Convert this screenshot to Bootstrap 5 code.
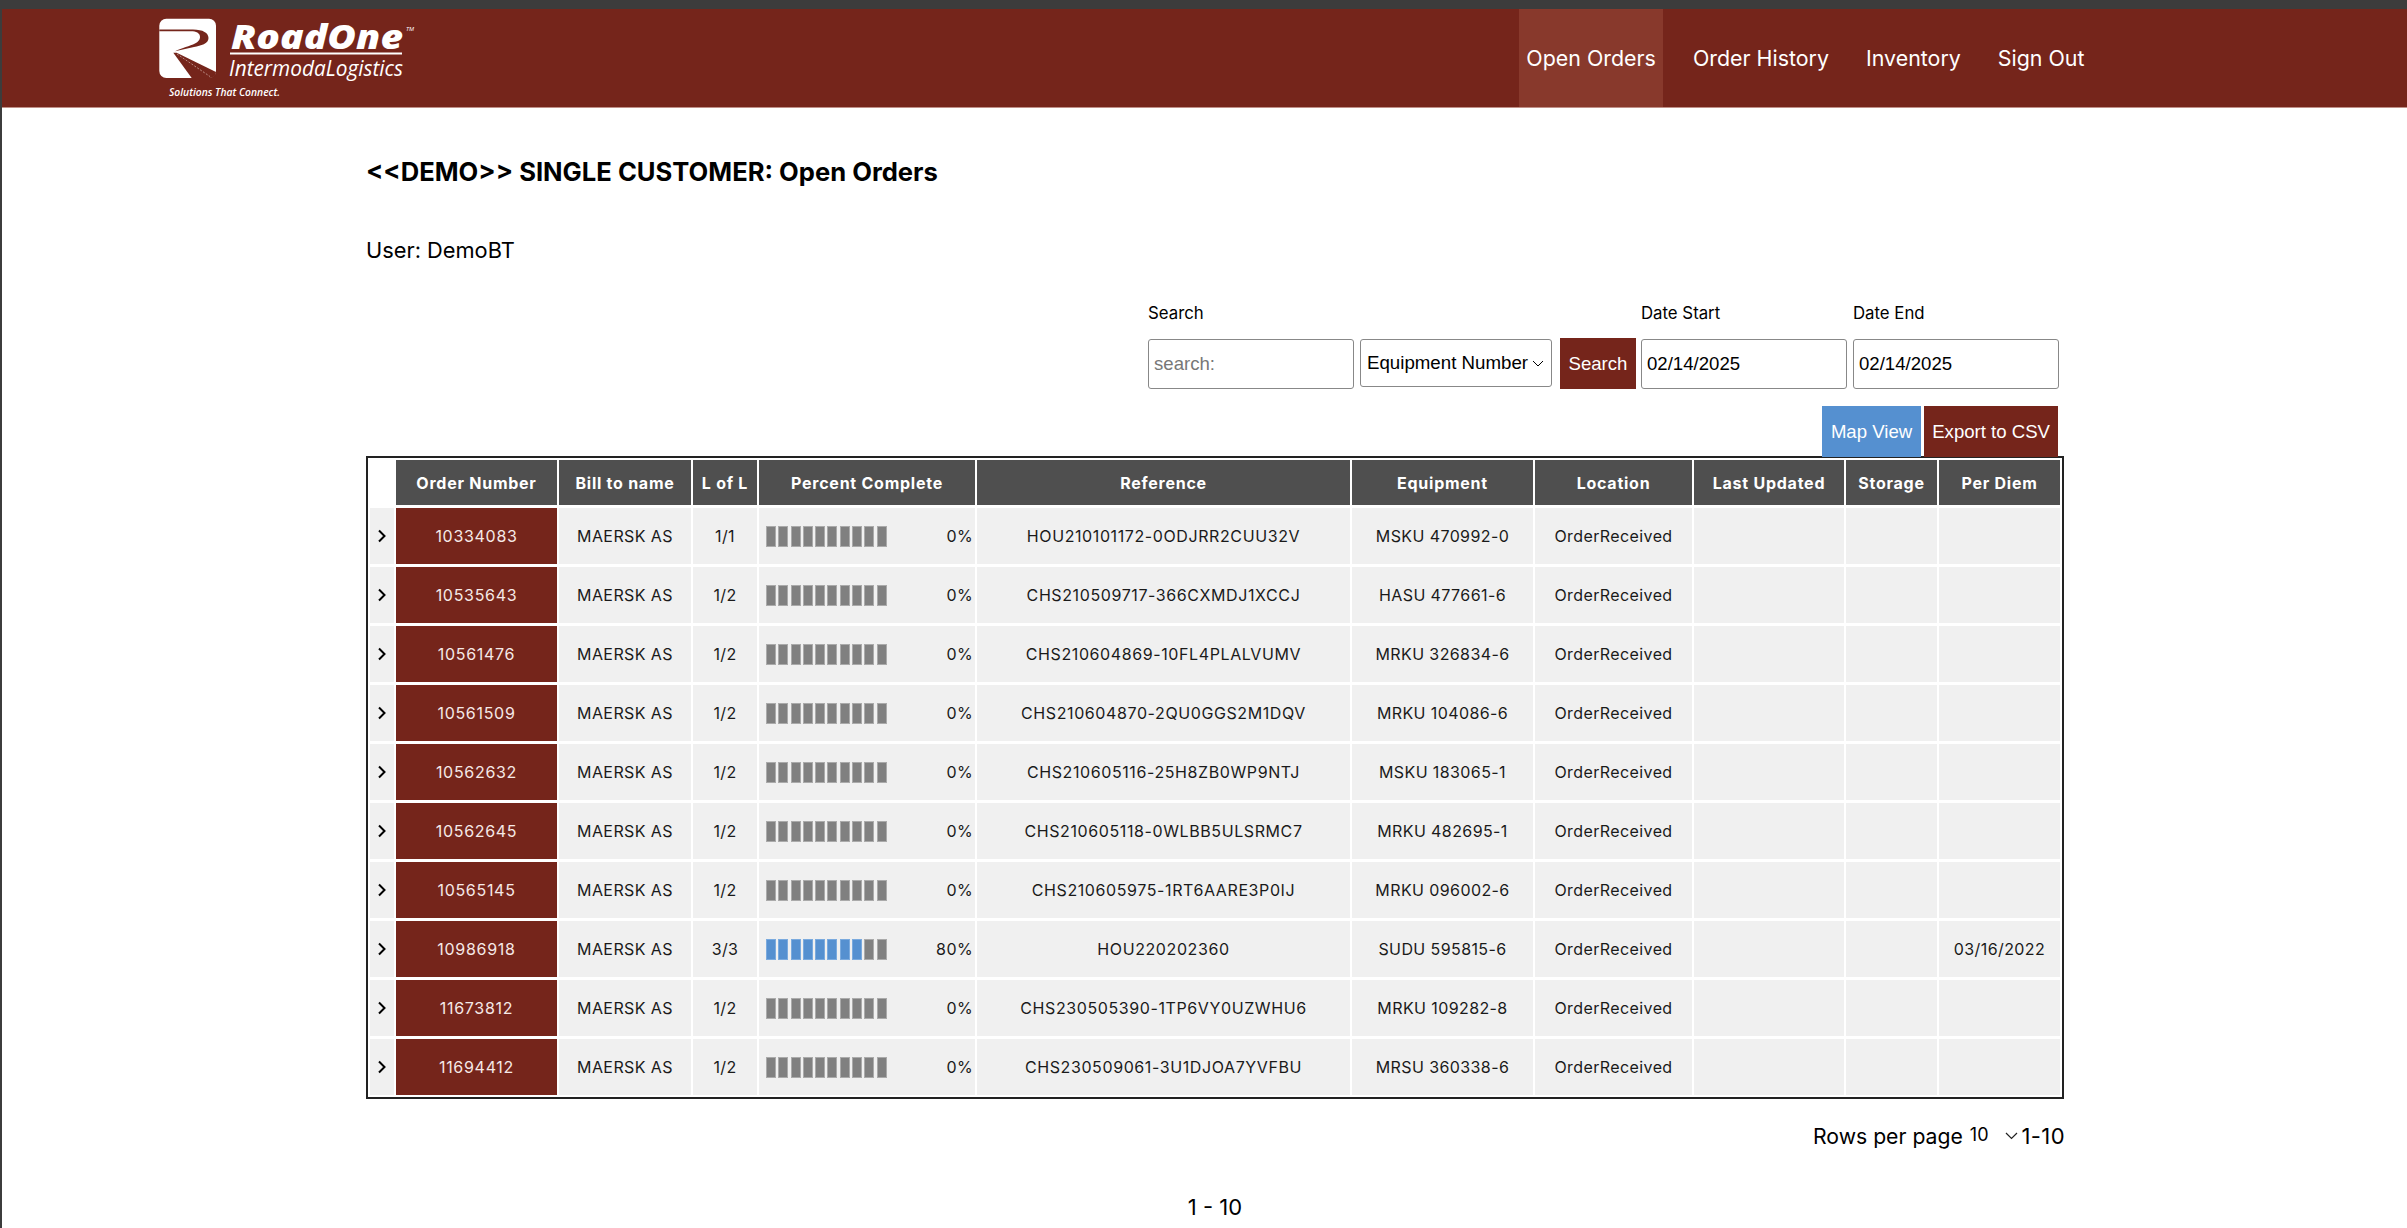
<!DOCTYPE html>
<html lang="en">
<head>
  <meta charset="UTF-8">
  <title>Open Orders</title>
  <link href="https://cdn.jsdelivr.net/npm/bootstrap@5.3.0/dist/css/bootstrap.min.css" rel="stylesheet">
  <style>
    body { background: #fff; border-left: 2px solid #3c3c3c; border-top: 9px solid #3c3c3c; font-family: Inter, "Liberation Sans", sans-serif; color: #000; min-height: 1228px; overflow: hidden; }
    .top-nav { background: #75251b; height: 99px; border-bottom: 1px solid #c09088; padding: 0; }
    .top-nav .navbar-brand { margin: 0 0 0 156px; padding: 0; line-height: 0; }
    .logo-big { font: italic 800 33px "Open Sans", sans-serif; fill: #fff; }
    .logo-sub { font: italic 400 21px "Open Sans", sans-serif; fill: #fff; }
    .logo-tag { font: italic 600 10.5px "Open Sans", sans-serif; fill: #fff; }
    .logo-tm { font: italic 400 6px "Open Sans", sans-serif; fill: #fff; }
    .top-links { margin-right: 315px; height: 98px; }
    .top-links .nav-link { color: #fff; font-size: 21.4px; height: 98px; padding: 0 7.5px; margin-right: 22px; display: flex; align-items: center; }
    .top-links .nav-link.active { background: #88392c; color: #fff; }
    .top-links .nav-item:last-child .nav-link { margin-right: 0; }
    .page-body { padding: 0 343px 0 364px; }
    .page-title { font-size: 25.6px; font-weight: 700; margin: 0; padding-top: 48px; line-height: 32px; }
    .user-line { font-size: 21.8px; line-height: 28px; margin: 48px 0 0; }
    .filter-row { margin-top: 38px; margin-right: 5px; }
    .filter-label { font-size: 16.8px; line-height: 22px; margin-bottom: 15px; display: block; }
    .filter-input { font: 18.6px "Liberation Sans", sans-serif; height: 50px; width: 206px; border: 1px solid #888; border-radius: 3px; padding: 0 5px; background: #fff; color: #000; }
    .filter-input::placeholder { color: #777; }
    .filter-select { width: 192px; height: 48px; margin: 0 8px 2px 6px; padding: 0 6px; display: flex; align-items: center; border: 1px solid #888; border-radius: 3px; font: 18.7px "Liberation Sans", sans-serif; white-space: nowrap; }
    .btn-rust, .btn-map { border: 0; border-radius: 0; color: #fff; font: 18.6px "Liberation Sans", sans-serif; padding: 0 8px; }
    .btn-rust { background: #75251b; }
    .btn-map { background: #5590d0; padding: 0 9px; }
    .btn-rust:hover { background: #75251b; color: #fff; }
    .btn-map:hover { background: #5590d0; color: #fff; }
    .btn-go { height: 51px; width: 76px; padding: 0; margin-right: 5px; }
    .date-end { margin-left: 6px; }
    .action-row { margin-top: 17px; height: 51px; margin-right: 6px; gap: 3px; }
    .action-row .btn { height: 51px; }
    .orders-box { border: 2px solid #222; margin-top: -1px; overflow: hidden; }
    .orders-grid { border-collapse: separate; border-spacing: 2px 3px; table-layout: fixed; width: 1694px; margin: -1px 0; font-size: 16px; letter-spacing: .4px; color: #1a1a1a; }
    .orders-grid th { background: #4f4f4f; color: #fff; height: 45px; font-weight: 700; text-align: center; vertical-align: middle; padding: 0; letter-spacing: .75px; }
    .orders-grid th.blank { background: #fff; }
    .orders-grid td { background: #f0f0f0; height: 56px; text-align: center; vertical-align: middle; padding: 0; }
    .orders-grid td.order-no { background: #75251b; color: #f5e9e7; letter-spacing: .7px; }
    .orders-grid td.ref-no { letter-spacing: .6px; }
    .row-arrow { display: block; margin: 0 auto; }
    .seg-bar { display: flex; gap: 2.3px; }
    .seg-bar i { width: 10px; height: 21px; background: #808080; border: 1px solid #aaa; }
    .seg-bar i.on { background: #5590d0; border-color: #7aaade; }
    .pct-cell { display: flex; justify-content: space-between; align-items: center; padding: 0 2px 0 7px; }
    .pager-row { line-height: 28px; margin-top: 23px; margin-right: -1px; }
    .pager-label { font-size: 21.2px; }
    .pager-size { font-size: 18px; margin: 0 16px 0 7px; position: relative; top: -1px; }
    .pager-range { font-size: 22px; letter-spacing: .4px; margin-left: 4px; }
    .page-count { font-size: 22px; line-height: 28px; text-align: center; margin: 43px 0 0; }
  </style>
</head>
<body>

  <!-- Header -->
  <nav class="navbar top-nav justify-content-between flex-nowrap">
    <a class="navbar-brand" href="#">
      <svg width="262" height="96" viewBox="0 0 262 96">
        <rect x="1.300" y="8.700" width="56.700" height="59.300" rx="7" fill="#fff"/>
        <path fill="#75251b" d="M1.300 19.500H35C45 19.500 50.500 23 50.500 28 50.500 34 43 35.500 36 37L17 41.300C24 38 32 36 37 33.500 41 31.500 42 29 42 27 42 23 38 21.300 33 21.300H1.300Z"/>
        <path fill="#75251b" d="M15.300 42.700L33.700 68H51Q58 68 58 62L18.700 42.700Z"/>
        <path d="M19 44L52 66.500" stroke="#e8cfc9" stroke-width=".6" stroke-dasharray="2 1.500" fill="none"/>
        <text class="logo-big" x="73" y="39" textLength="172" lengthAdjust="spacingAndGlyphs">RoadOne</text>
        <text class="logo-tm" x="248" y="21">TM</text>
        <rect x="72" y="42.500" width="172" height="2" fill="#fff"/>
        <text class="logo-sub" x="71" y="66" textLength="174" lengthAdjust="spacingAndGlyphs">IntermodaLogistics</text>
        <text class="logo-tag" x="11" y="86" textLength="111" lengthAdjust="spacingAndGlyphs">Solutions That Connect.</text>
      </svg>
    </a>
    <ul class="navbar-nav flex-row top-links">
      <li class="nav-item"><a class="nav-link active" href="#">Open Orders</a></li>
      <li class="nav-item"><a class="nav-link" href="#">Order History</a></li>
      <li class="nav-item"><a class="nav-link" href="#">Inventory</a></li>
      <li class="nav-item"><a class="nav-link" href="#">Sign Out</a></li>
    </ul>
  </nav>

  <div class="page-body">
    <h1 class="page-title">&lt;&lt;DEMO&gt;&gt; SINGLE CUSTOMER: Open Orders</h1>
    <p class="user-line">User: DemoBT</p>

    <!-- Filters -->
    <div class="d-flex justify-content-end align-items-end filter-row">
      <div>
        <label class="filter-label">Search</label>
        <input class="filter-input" type="text" placeholder="search:">
      </div>
      <div class="filter-select">Equipment Number
        <svg class="ms-1" width="12" height="7" viewBox="0 0 12 7"><path d="M1 1l5 5 5-5" fill="none" stroke="#000"/></svg>
      </div>
      <button class="btn btn-rust btn-go">Search</button>
      <div>
        <label class="filter-label">Date Start</label>
        <input class="filter-input" type="text" value="02/14/2025">
      </div>
      <div class="date-end">
        <label class="filter-label">Date End</label>
        <input class="filter-input" type="text" value="02/14/2025">
      </div>
    </div>
    <div class="d-flex justify-content-end action-row">
      <button class="btn btn-map">Map View</button>
      <button class="btn btn-rust">Export to CSV</button>
    </div>

    <!-- Orders table -->
    <div class="orders-box">
      <table class="orders-grid">
        <colgroup>
          <col style="width:24px"><col style="width:161px"><col style="width:132px"><col style="width:64px"><col style="width:216px"><col style="width:373px"><col style="width:181px"><col style="width:157px"><col style="width:150px"><col style="width:91px"><col style="width:121px">
        </colgroup>
        <thead>
          <tr>
            <th class="blank"></th><th>Order Number</th><th>Bill to name</th><th>L of L</th><th>Percent Complete</th><th>Reference</th><th>Equipment</th><th>Location</th><th>Last Updated</th><th>Storage</th><th>Per Diem</th>
          </tr>
        </thead>
        <tbody id="orderRows"></tbody>
      </table>
    </div>

    <div class="d-flex justify-content-end align-items-center pager-row">
      <span class="pager-label">Rows per page</span>
      <span class="pager-size">10</span>
      <svg width="13" height="8" viewBox="0 0 13 8"><path d="M1 1l5.500 5.500L12 1" fill="none" stroke="#222" stroke-width="1.200"/></svg>
      <span class="pager-range">1-10</span>
    </div>
    <p class="page-count">1 - 10</p>
  </div>

  <script>
    const orders = [
      ["10334083", "1/1", 0, "HOU210101172-0ODJRR2CUU32V", "MSKU 470992-0", ""],
      ["10535643", "1/2", 0, "CHS210509717-366CXMDJ1XCCJ", "HASU 477661-6", ""],
      ["10561476", "1/2", 0, "CHS210604869-10FL4PLALVUMV", "MRKU 326834-6", ""],
      ["10561509", "1/2", 0, "CHS210604870-2QU0GGS2M1DQV", "MRKU 104086-6", ""],
      ["10562632", "1/2", 0, "CHS210605116-25H8ZB0WP9NTJ", "MSKU 183065-1", ""],
      ["10562645", "1/2", 0, "CHS210605118-0WLBB5ULSRMC7", "MRKU 482695-1", ""],
      ["10565145", "1/2", 0, "CHS210605975-1RT6AARE3P0IJ", "MRKU 096002-6", ""],
      ["10986918", "3/3", 80, "HOU220202360", "SUDU 595815-6", "03/16/2022"],
      ["11673812", "1/2", 0, "CHS230505390-1TP6VY0UZWHU6", "MRKU 109282-8", ""],
      ["11694412", "1/2", 0, "CHS230509061-3U1DJOA7YVFBU", "MRSU 360338-6", ""]
    ];

    document.getElementById("orderRows").innerHTML = orders.map(o => {
      let segs = "";
      for (let i = 0; i < 10; i++) segs += `<i class="${i < o[2] / 10 ? "on" : ""}"></i>`;
      return `<tr>
        <td><svg class="row-arrow" width="10" height="14" viewBox="0 0 10 14"><path d="M2 1.500L7.500 7 2 12.500" fill="none" stroke="#000" stroke-width="2"/></svg></td>
        <td class="order-no">${o[0]}</td>
        <td>MAERSK AS</td>
        <td>${o[1]}</td>
        <td><div class="pct-cell"><div class="seg-bar">${segs}</div><span>${o[2]}%</span></div></td>
        <td class="ref-no">${o[3]}</td>
        <td>${o[4]}</td>
        <td>OrderReceived</td>
        <td></td>
        <td></td>
        <td>${o[5]}</td>
      </tr>`;
    }).join("");
  </script>
  <script src="https://cdn.jsdelivr.net/npm/bootstrap@5.3.0/dist/js/bootstrap.bundle.min.js"></script>
</body>
</html>
